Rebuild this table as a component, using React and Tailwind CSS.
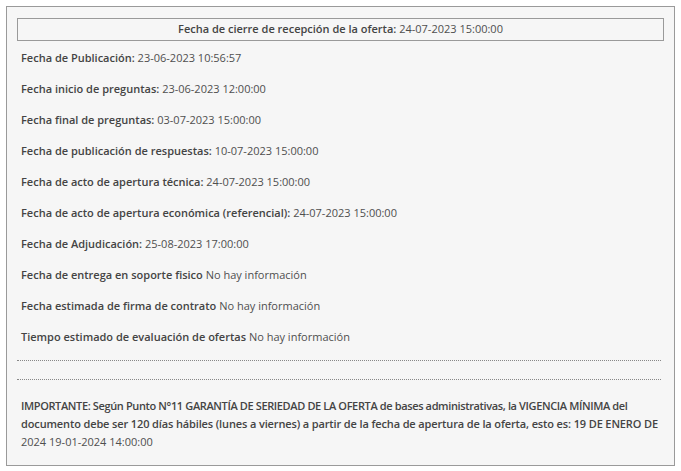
export default function App() {
  const rows = [
    ["Fecha de Publicación:", "23-06-2023 10:56:57"],
    ["Fecha inicio de preguntas:", "23-06-2023 12:00:00"],
    ["Fecha final de preguntas:", "03-07-2023 15:00:00"],
    ["Fecha de publicación de respuestas:", "10-07-2023 15:00:00"],
    ["Fecha de acto de apertura técnica:", "24-07-2023 15:00:00"],
    ["Fecha de acto de apertura económica (referencial):", "24-07-2023 15:00:00"],
    ["Fecha de Adjudicación:", "25-08-2023 17:00:00"],
    ["Fecha de entrega en soporte fisico", "No hay información"],
    ["Fecha estimada de firma de contrato", "No hay información"],
    ["Tiempo estimado de evaluación de ofertas", "No hay información"],
  ];
  return (
    <div className="w-[681px] h-[471px] bg-white pt-[6px] pl-[6px] font-['Open_Sans',sans-serif] text-[11px] text-[#4f4f4f]">
      <div className="w-[669px] h-[460px] border border-[#9a9a9a] bg-[#f6f6f6] pt-[11px] px-[10px]">
        <div className="h-[23px] border border-[#9a9a9a] flex items-center justify-center">
          <span className="font-semibold text-[#444]">Fecha de cierre de recepción de la oferta:</span>
          <span>&nbsp;24-07-2023 15:00:00</span>
        </div>
        <div className="pl-[4px] pt-[2px]">
          {rows.map(([l, v], i) => (
            <div key={i} className="h-[31px] flex items-center">
              <span className="font-semibold text-[#444]">{l}</span>
              <span>&nbsp;{v}</span>
            </div>
          ))}
        </div>
        <div className="mt-[7px] border-t border-dotted border-[#888] mr-[3px]"></div>
        <div className="mt-[18px] border-t border-dotted border-[#888] mr-[3px]"></div>
        <div className="mt-[17px] pl-[4px] leading-[18px] whitespace-nowrap">
          <div className="font-semibold text-[#444] tracking-[-0.37px]">
            IMPORTANTE: Según Punto N°11 GARANTÍA DE SERIEDAD DE LA OFERTA de bases administrativas, la VIGENCIA MÍNIMA del
          </div>
          <div className="font-semibold text-[#444] tracking-[-0.13px]">
            documento debe ser 120 días hábiles (lunes a viernes) a partir de la fecha de apertura de la oferta, esto es: 19 DE ENERO DE
          </div>
          <div>2024 19-01-2024 14:00:00</div>
        </div>
      </div>
    </div>
  );
}
